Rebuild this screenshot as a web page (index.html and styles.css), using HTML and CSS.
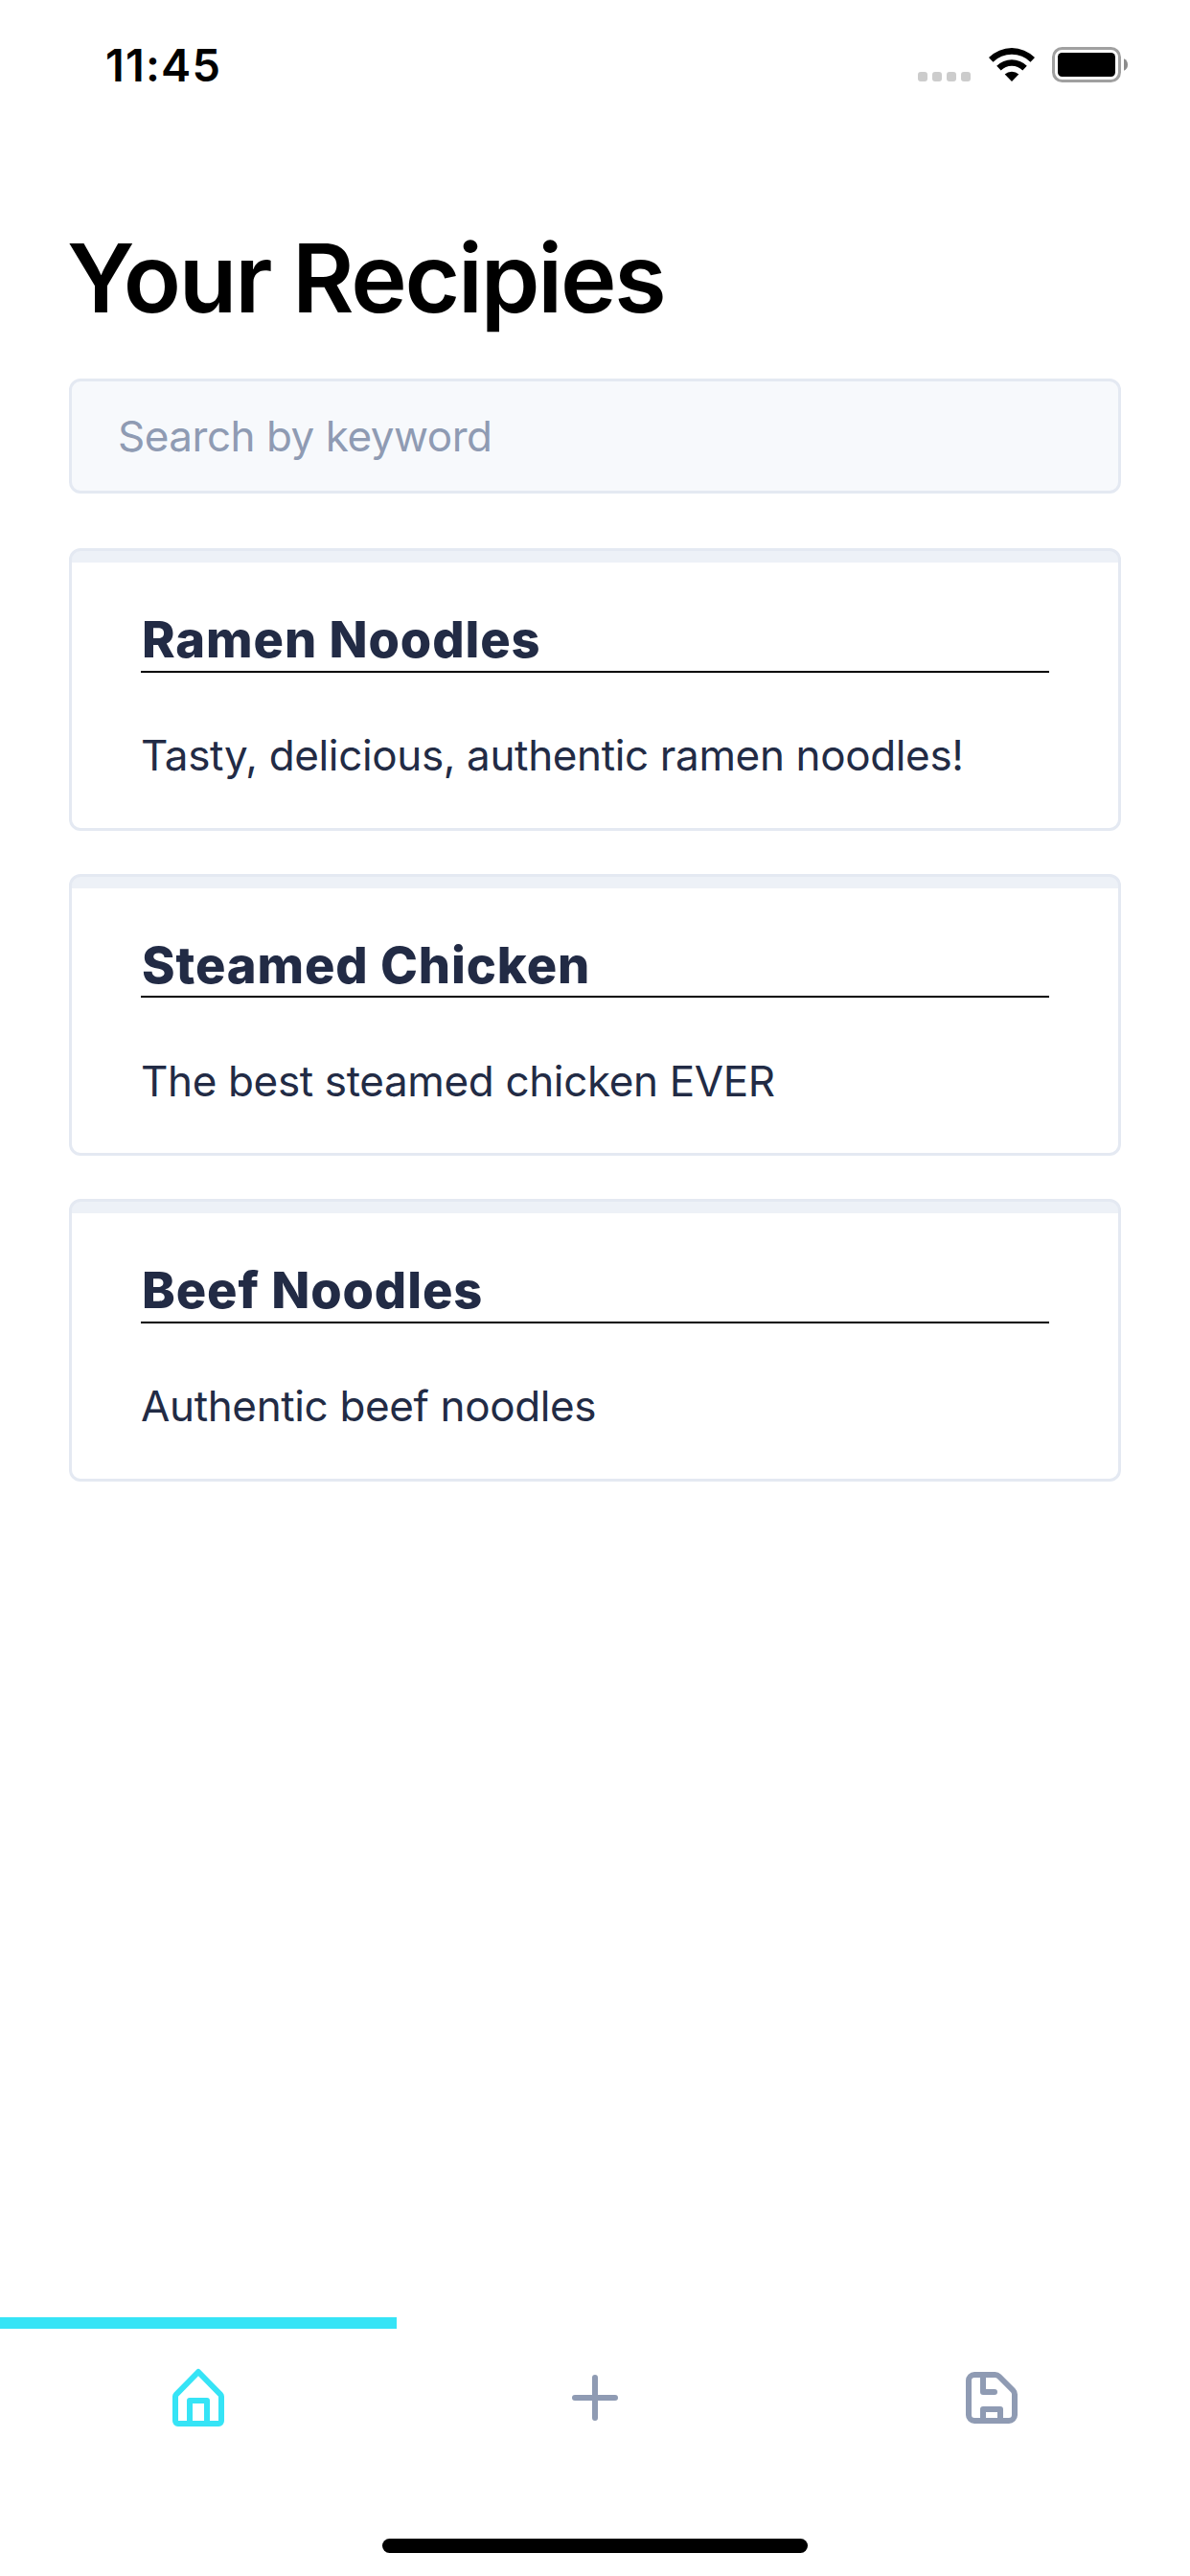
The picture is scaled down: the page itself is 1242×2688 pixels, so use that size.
FILE: index.html
```html
<!DOCTYPE html>
<html lang="en">
<head>
<meta charset="utf-8">
<title>Your Recipies</title>
<link rel="stylesheet" href="styles.css">
</head>
<body>
<div class="screen">
  <header class="status">
    <span class="time">11:45</span>
    <div class="indicators">
      <div class="signal"><i></i><i></i><i></i><i></i></div>
      <svg class="wifi" viewBox="0 0 48 36" width="48" height="36">
        <path d="M24 36 16.700 28.600A10.500 10.500 0 0 1 31.300 28.600Z"/>
        <path d="M8.200 19.700A22.500 22.500 0 0 1 39.800 19.700L35.300 24.400A16 16 0 0 0 12.700 24.400Z"/>
        <path d="M0 11A34 34 0 0 1 48 11L43.500 15.700A28 28 0 0 0 4.500 15.700Z"/>
      </svg>
      <svg class="battery" viewBox="0 0 80 37" width="80" height="37">
        <rect class="shell" x="1.500" y="1.500" width="69" height="34" rx="9"/>
        <rect x="6" y="6" width="60" height="25" rx="4.500"/>
        <path class="nub" d="M75 12.200Q79 14 79 18.500T75 24.800Z"/>
      </svg>
    </div>
  </header>

  <main class="content">
    <h1 class="heading">Your Recipies</h1>
    <div class="search"><span>Search by keyword</span></div>
    <div class="list">
      <article class="card">
        <h2 class="card-title">Ramen Noodles</h2>
        <p class="card-text">Tasty, delicious, authentic ramen noodles!</p>
      </article>
      <article class="card">
        <h2 class="card-title">Steamed Chicken</h2>
        <p class="card-text">The best steamed chicken EVER</p>
      </article>
      <article class="card">
        <h2 class="card-title">Beef Noodles</h2>
        <p class="card-text">Authentic beef noodles</p>
      </article>
    </div>
  </main>

  <nav class="tabs">
    <a class="tab active"><svg class="icon" viewBox="0 0 24 24"><path d="M20.420 10.180L12.710 2.300a1 1 0 0 0-1.420 0l-7.710 7.890A2 2 0 0 0 3 11.620V20a2 2 0 0 0 1.890 2h14.220A2 2 0 0 0 21 20v-8.380a2.070 2.070 0 0 0-.580-1.440zM10 20v-6h4v6zm9 0h-3v-7a1 1 0 0 0-1-1H9a1 1 0 0 0-1 1v7H5v-8.420l7-7.150 7 7.190z"/></svg></a>
    <a class="tab"><svg class="icon" viewBox="0 0 24 24"><path d="M19 11h-6V5a1 1 0 0 0-2 0v6H5a1 1 0 0 0 0 2h6v6a1 1 0 0 0 2 0v-6h6a1 1 0 0 0 0-2z"/></svg></a>
    <a class="tab"><svg class="icon" viewBox="0 0 24 24"><path d="M20.120 8.710l-4.830-4.830A3 3 0 0 0 13.170 3H6a3 3 0 0 0-3 3v12a3 3 0 0 0 3 3h12a3 3 0 0 0 3-3v-7.170a3 3 0 0 0-.880-2.120zM10 19v-2h4v2zm9-1a1 1 0 0 1-1 1h-2v-3a1 1 0 0 0-1-1H9a1 1 0 0 0-1 1v3H6a1 1 0 0 1-1-1V6a1 1 0 0 1 1-1h2v5a1 1 0 0 0 1 1h4a1 1 0 0 0 0-2h-3V5h3.170a1.050 1.050 0 0 1 .710.290l4.830 4.830a1 1 0 0 1 .290.710z"/></svg></a>
  </nav>
  <div class="home-bar"></div>
</div>
</body>
</html>
```
FILE: styles.css
```css
* { box-sizing: border-box; }
body { margin: 0; background: #fff; font-family: Inter, "Noto Sans", sans-serif; }
h1, h2, p { margin: 0; }

.screen {
  width: 1242px;
  height: 2688px;
  display: flex;
  flex-direction: column;
  background: #fff;
}

.status {
  height: 132px;
  padding: 40px 64px 0 110px;
  display: flex;
  justify-content: space-between;
  align-items: flex-start;
}
.time { font-size: 46.8px; font-weight: 600; line-height: 56px; letter-spacing: 1.2px; }
.indicators { display: flex; align-items: flex-start; padding-top: 9px; }
.signal { display: flex; gap: 5px; padding-top: 26px; margin-right: 19px; }
.signal i { width: 10px; height: 10px; border-radius: 3px; background: #ccc; }
.wifi { display: block; margin-right: 18px; }
.battery { display: block; }
.shell { fill: none; stroke: #a0a0a0; stroke-width: 3; }
.nub { fill: #8c8c8c; }

.content { flex: 1; padding: 98px 72px 0; }
.heading { margin-left: -2px; font-size: 99px; font-weight: 600; line-height: 120px; letter-spacing: -2.2px; }

.search {
  height: 120px;
  margin-top: 45px;
  padding-left: 48px;
  display: flex;
  align-items: center;
  border: 3px solid #e4e9f2;
  border-radius: 12px;
  background: #f7f9fc;
  color: #8f9bb3;
  font-size: 44px;
  letter-spacing: -0.48px;
}

.list { margin-top: 57px; display: flex; flex-direction: column; gap: 45px; }
.card {
  height: 294.67px;
  padding: 61px 72px 0;
  border: 3px solid #e4e9f2;
  border-radius: 12px;
  background: linear-gradient(#edf1f7 12px, #fff 12px);
  color: #222b45;
}
.card-title {
  font-size: 52.4px;
  font-weight: 800;
  line-height: 63.6px;
  letter-spacing: 0.9px;
  text-indent: 1px;
  border-bottom: 2px solid #000;
}
.card-text { margin-top: 59.4px; font-size: 44px; line-height: 54px; letter-spacing: -0.36px; }

.tabs { height: 156px; display: grid; grid-template-columns: repeat(3, 1fr); }
.tab {
  border-top: 12px solid transparent;
  padding-top: 36px;
  display: flex;
  justify-content: center;
  color: #8f9bb3;
}
.tab.active { border-color: #36e4f6; color: #36e4f6; }
.icon { width: 72px; height: 72px; fill: currentColor; }

.home-bar { width: 444px; height: 15px; margin: 75px auto 24px; border-radius: 8px; background: #000; }
```
